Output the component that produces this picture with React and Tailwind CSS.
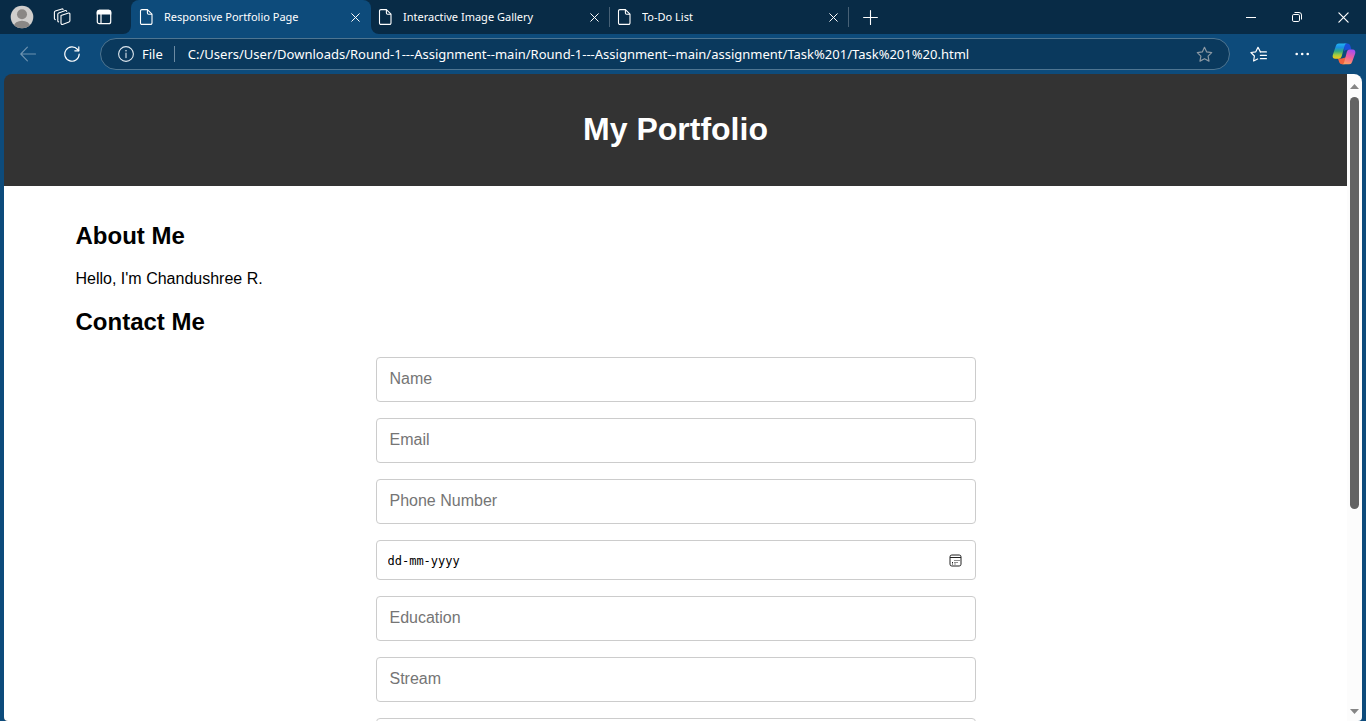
import React from "react";

const chromeFont = "font-['Noto_Sans','Open_Sans',sans-serif]";
const pageFont = "font-['Liberation_Sans',Arial,sans-serif]";

function FileIcon() {
  return (
    <svg className="h-4 w-3.5 shrink-0" viewBox="0 0 14 16" fill="none" stroke="#fff" strokeWidth="1.1" strokeLinejoin="round">
      <path d="M2.9 .6H8.4L13 5.2V14a1.4 1.4 0 0 1-1.4 1.4H2.9A1.4 1.4 0 0 1 1.5 14V2A1.4 1.4 0 0 1 2.9.6Z" />
      <path d="M8.4 .6V4a1.2 1.2 0 0 0 1.2 1.2h3.4" />
    </svg>
  );
}

function CrossIcon({ className }) {
  return (
    <svg className={className} viewBox="0 0 10 10" fill="none" stroke="#fff" strokeWidth="1.1" strokeLinecap="round">
      <path d="M.8.8l8.4 8.4M9.2.8L.8 9.2" />
    </svg>
  );
}

function Tab({ title, active }) {
  return (
    <div
      className={
        active
          ? "relative flex h-full w-60 shrink items-center rounded-t-lg bg-[#0d4b7b] pl-2 pr-2.5"
          : "relative flex h-full w-[239px] shrink items-center pl-[7px] pr-2.5"
      }
    >
      {active && (
        <>
          <svg className="absolute bottom-0 -left-2 size-2" viewBox="0 0 8 8">
            <path d="M8 0v8H0a8 8 0 0 0 8-8Z" fill="#0d4b7b" />
          </svg>
          <svg className="absolute bottom-0 -right-2 size-2" viewBox="0 0 8 8">
            <path d="M0 0v8h8A8 8 0 0 1 0 0Z" fill="#0d4b7b" />
          </svg>
        </>
      )}
      <FileIcon />
      <span className="ml-[11px] flex-1 truncate text-[11px] leading-4 text-white">{title}</span>
      <button type="button" aria-label="Close tab" className="flex size-3 items-center justify-center">
        <CrossIcon className="size-[9px]" />
      </button>
      {!active && <span className="absolute right-0 top-[7px] h-5 w-px bg-[#476176]" />}
    </div>
  );
}

function TabStrip() {
  return (
    <div className="flex h-[34px] shrink-0 items-center bg-[#082b46]">
      <div className="flex w-[131px] shrink-0 items-center pl-2.5">
        <button type="button" aria-label="Profile">
          <svg className="size-6" viewBox="0 0 24 24">
            <defs>
              <clipPath id="avatar">
                <circle cx="12" cy="12" r="11.3" />
              </clipPath>
            </defs>
            <circle cx="12" cy="12" r="11.3" fill="#d0cecc" />
            <g clipPath="url(#avatar)" fill="#8a8785">
              <circle cx="12" cy="9.3" r="5" />
              <ellipse cx="12" cy="21" rx="8" ry="5.2" />
            </g>
          </svg>
        </button>
        <button type="button" aria-label="Workspaces" className="ml-[19px]">
          <svg className="size-[18px]" viewBox="0 0 18 18" fill="none" stroke="#fff" strokeWidth="1.1" strokeLinejoin="round" strokeLinecap="round">
            <path d="M8 7.6 15.6 5.1a1 1 0 0 1 1.3 1v6.6a1.4 1.4 0 0 1-.9 1.3L9.5 16.4A1.2 1.2 0 0 1 8 15.3Z" />
            <path d="M5.6 13.9a1 1 0 0 1-.8-1V6.2a1.4 1.4 0 0 1 .9-1.3l6.7-2.3a1 1 0 0 1 1.3.8" />
            <path d="M2.3 11.6a1 1 0 0 1-.9-1V4.3A1.4 1.4 0 0 1 2.3 3L8.9.9a1 1 0 0 1 1.2.5" />
          </svg>
        </button>
        <button type="button" aria-label="Tab actions" className="ml-[25px]">
          <svg className="size-4" viewBox="0 0 16 16" fill="none" stroke="#fff" strokeWidth="1.2">
            <rect x="1.3" y="1.3" width="13.4" height="13.4" rx="2" />
            <path d="M1.3 3.3a2 2 0 0 1 2-2h9.4a2 2 0 0 1 2 2V5H1.3Z" fill="#fff" />
            <path d="M5 5v9.7" />
          </svg>
        </button>
      </div>
      <div className="flex h-full min-w-0">
        <Tab title="Responsive Portfolio Page" active />
        <Tab title="Interactive Image Gallery" />
        <Tab title="To-Do List" />
      </div>
      <button type="button" aria-label="New tab" className="ml-3.5">
        <svg className="size-[15px]" viewBox="0 0 15 15" stroke="#fff" strokeWidth="1.1" strokeLinecap="round">
          <path d="M7.5.6v13.8M.6 7.5h13.8" />
        </svg>
      </button>
      <div className="ml-auto flex h-full">
        <button type="button" aria-label="Minimize" className="flex w-[46px] items-center justify-center">
          <span className="h-px w-2.5 bg-white" />
        </button>
        <button type="button" aria-label="Restore" className="flex w-[46px] items-center justify-center">
          <svg className="size-2.5" viewBox="0 0 10 10" fill="none" stroke="#fff" strokeWidth="1">
            <rect x=".5" y="2.5" width="7" height="7" rx="1.3" />
            <path d="M2.5.5H7A2.5 2.5 0 0 1 9.5 3v4.5" />
          </svg>
        </button>
        <button type="button" aria-label="Close" className="flex w-[46px] items-center justify-center">
          <CrossIcon className="size-[11px]" />
        </button>
      </div>
    </div>
  );
}

const starPath =
  "M8.5 1.3l2.2 4.6 5 .7-3.6 3.5.9 5-4.5-2.4L4 15.1l.9-5L1.3 6.6l5-.7Z";

function Toolbar() {
  return (
    <div className="flex h-10 shrink-0 items-center bg-[#0d4b7b] pl-5">
      <button type="button" aria-label="Back">
        <svg className="size-4" viewBox="0 0 16 16" fill="none" stroke="#6e93b0" strokeWidth="1.1" strokeLinecap="round" strokeLinejoin="round">
          <path d="M7.4 1.2.8 8l6.6 6.8M.8 8h14.7" />
        </svg>
      </button>
      <button type="button" aria-label="Refresh" className="ml-7">
        <svg className="size-4" viewBox="0 0 16 16" fill="none" stroke="#fff" strokeWidth="1.2" strokeLinecap="round" strokeLinejoin="round">
          <path d="M15.2 8A7.2 7.2 0 1 1 13.6 3.5L14.6 4.7" />
          <path d="M14.8.8v4h-4" />
        </svg>
      </button>
      <div className="ml-5 flex h-8 min-w-0 flex-1 items-center rounded-full border border-[#4e7591] bg-[#0a395d] pl-[17px] pr-4">
        <svg className="size-4 shrink-0" viewBox="0 0 16 16" fill="none" stroke="#dfe8ef" strokeWidth="1.1">
          <circle cx="8" cy="8" r="7.4" />
          <path d="M8 7v4.6" strokeLinecap="round" />
          <circle cx="8" cy="4.7" r=".8" fill="#dfe8ef" stroke="none" />
        </svg>
        <span className="ml-2 text-[13px] leading-5 text-white">File</span>
        <span className="ml-[11px] h-4 w-px shrink-0 bg-[#6c8ba3]" />
        <input
          type="text"
          aria-label="Address"
          className="ml-[13px] min-w-0 flex-1 bg-transparent text-[13px] leading-5 text-white outline-none"
          defaultValue="C:/Users/User/Downloads/Round-1---Assignment--main/Round-1---Assignment--main/assignment/Task%201/Task%201%20.html"
        />
        <button type="button" aria-label="Add to favorites">
          <svg className="size-[17px]" viewBox="0 0 17 17" fill="none" stroke="#8b98a3" strokeWidth="1.2" strokeLinejoin="round">
            <path d={starPath} />
          </svg>
        </button>
      </div>
      <button type="button" aria-label="Favorites" className="ml-5">
        <svg className="size-[17px]" viewBox="0 0 17 17" fill="none" stroke="#fff" strokeWidth="1.2" strokeLinejoin="round" strokeLinecap="round">
          <path d="M10.4 5.9 8 1.3 5.8 5.8l-4.9.7 3.5 3.5-.8 5 4-2" />
          <path d="M10.4 5.9h6M10.4 9.4h6M10.4 12.7h6" />
        </svg>
      </button>
      <button type="button" aria-label="Settings and more" className="ml-[27px]">
        <svg className="size-4" viewBox="0 0 16 16" fill="#fff">
          <circle cx="2.7" cy="8" r="1.3" />
          <circle cx="8.2" cy="8" r="1.3" />
          <circle cx="13.7" cy="8" r="1.3" />
        </svg>
      </button>
      <button type="button" aria-label="Copilot" className="ml-[22px] mr-2.5">
        <svg className="size-6" viewBox="0 0 24 24">
          <defs>
            <linearGradient id="cpLeft" x1="0" y1="0" x2="0" y2="1">
              <stop offset="0" stopColor="#22b5f2" />
              <stop offset=".25" stopColor="#1a8fe6" />
              <stop offset=".5" stopColor="#2fa882" />
              <stop offset=".75" stopColor="#a5cc3e" />
              <stop offset="1" stopColor="#f9c515" />
            </linearGradient>
            <linearGradient id="cpRight" x1=".6" y1="0" x2=".3" y2="1">
              <stop offset="0" stopColor="#a64df0" />
              <stop offset=".5" stopColor="#f0609a" />
              <stop offset="1" stopColor="#ffa45c" />
            </linearGradient>
          </defs>
          <path d="M12 1.500h3.500a3 3 0 0 1 2.700 2.100l1.300 4.200h-4.400a3 3 0 0 0-2.800 2Z" fill="#1a4fd8" />
          <path d="M6 16.500l1.200 3.700a3 3 0 0 0 2.800 2.100h2.500l2-7-4.800 1.200Z" fill="#f0623c" />
          <path d="M6.800 1.500h8.500a2.600 2.600 0 0 0-2.600 1.900L9.600 14.600a3 3 0 0 1-2.800 2.200H3.400C1.100 16.800.200 14.900.800 12.900L3.900 3.700A3 3 0 0 1 6.800 1.500Z" fill="url(#cpLeft)" />
          <path d="M17.200 22.300H9.400a2.600 2.600 0 0 0 2.700-1.900L14.900 9.700a3 3 0 0 1 2.800-2.200h2.900c2.300 0 3.200 1.900 2.600 3.900l-3.100 8.700A3 3 0 0 1 17.200 22.300Z" fill="url(#cpRight)" />
        </svg>
      </button>
    </div>
  );
}

const fieldClass =
  "h-[45px] w-full shrink-0 rounded border border-[#ccc] bg-white px-[13px] pb-0.5 text-base text-black outline-none placeholder:text-[#757575]";

function Field({ label, type = "text", placeholder = label }) {
  return <input type={type} aria-label={label} placeholder={placeholder} className={fieldClass} />;
}

function DateField() {
  return (
    <div className="flex h-10 w-full shrink-0 items-center rounded border border-[#ccc] bg-white pl-[11px] pr-[13px]">
      <input
        type="text"
        aria-label="Date of birth"
        placeholder="dd-mm-yyyy"
        className="min-w-0 flex-1 bg-transparent pt-0.5 font-['DejaVu_Sans_Mono',monospace] text-[12px] text-black outline-none placeholder:text-black"
      />
      <button type="button" aria-label="Open calendar">
        <svg className="size-[13px]" viewBox="0 0 13 13" fill="none" stroke="#222">
          <rect x="1" y="1" width="11" height="11" rx="1.800" />
          <path d="M1 3.500h11" />
          <path d="M5.500 6.500h1M7.500 6.500h1M9.500 6.500h1M3 8.500h1M5.500 8.500h1M7.500 8.500h1M3 10h1M5.500 10h1" />
        </svg>
      </button>
    </div>
  );
}

function Scrollbar() {
  return (
    <div className="flex w-[15px] shrink-0 flex-col items-center bg-[#fcfcfc] pt-2.5 pb-[7px]">
      <svg className="h-[5px] w-[9px] shrink-0" viewBox="0 0 9 5">
        <path d="M4.500 0 9 5H0Z" fill="#858585" />
      </svg>
      <div className="mt-2 flex w-full flex-1 justify-center">
        <div className="h-[67.3%] w-[9px] rounded-full bg-[#636363]" />
      </div>
      <svg className="h-[5px] w-[9px] shrink-0" viewBox="0 0 9 5">
        <path d="M0 0h9L4.500 5Z" fill="#858585" />
      </svg>
    </div>
  );
}

function Portfolio() {
  return (
    <div className={`flex min-w-0 flex-1 flex-col overflow-hidden bg-[#333] text-black ${pageFont}`}>
      <header className="flex h-28 shrink-0 items-center justify-center pb-0.5">
        <h1 className="text-[32px] font-bold leading-9 text-white">My Portfolio</h1>
      </header>
      <main className="min-h-0 flex-1 bg-white pt-9">
        <div className="mx-auto max-w-[1200px]">
          <section>
            <h2 className="text-2xl font-bold leading-7">About Me</h2>
            <p className="mt-5 text-base leading-[18px]">Hello, I'm Chandushree R.</p>
          </section>
          <section className="mt-5">
            <h2 className="text-2xl font-bold leading-7">Contact Me</h2>
            <form className="mx-auto mt-[21px] flex max-w-[600px] flex-col gap-4">
              <Field label="Name" />
              <Field label="Email" type="email" />
              <Field label="Phone Number" type="tel" />
              <DateField />
              <Field label="Education" />
              <Field label="Stream" />
              <Field label="College" />
            </form>
          </section>
        </div>
      </main>
    </div>
  );
}

export default function App() {
  return (
    <div className={`flex h-screen flex-col overflow-hidden bg-[#0d4b7b] ${chromeFont}`}>
      <TabStrip />
      <Toolbar />
      <div className="mx-1 flex min-h-0 flex-1 overflow-hidden rounded-t-lg rounded-b-sm">
        <Portfolio />
        <Scrollbar />
      </div>
    </div>
  );
}
